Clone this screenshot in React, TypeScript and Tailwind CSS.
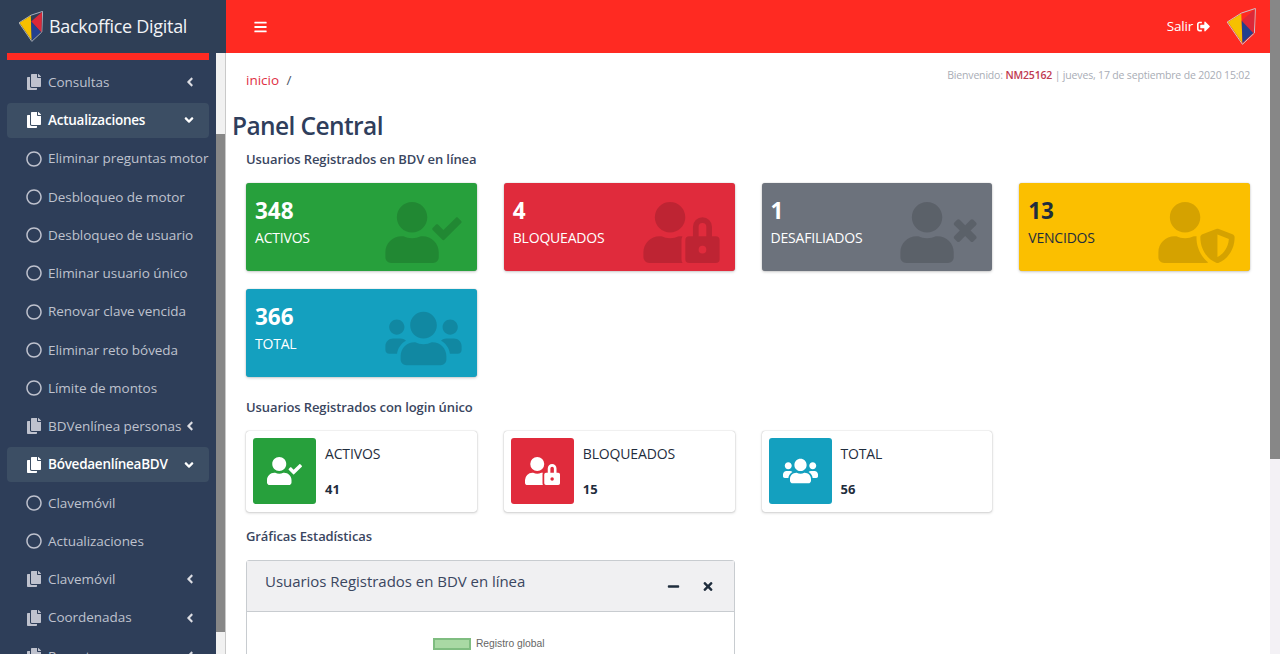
import type { ComponentType } from 'react'
import {
  FaAngleDown,
  FaAngleLeft,
  FaBars,
  FaCopy,
  FaMinus,
  FaRegCircle,
  FaSignOutAlt,
  FaTimes,
  FaUserCheck,
  FaUserLock,
  FaUserShield,
  FaUserTimes,
  FaUsers,
} from 'react-icons/fa'

type MenuItem = { label: string; kind: 'group' | 'open' | 'leaf' }

const MENU: MenuItem[] = [
  { label: 'Consultas', kind: 'group' },
  { label: 'Actualizaciones', kind: 'open' },
  { label: 'Eliminar preguntas motor', kind: 'leaf' },
  { label: 'Desbloqueo de motor', kind: 'leaf' },
  { label: 'Desbloqueo de usuario', kind: 'leaf' },
  { label: 'Eliminar usuario único', kind: 'leaf' },
  { label: 'Renovar clave vencida', kind: 'leaf' },
  { label: 'Eliminar reto bóveda', kind: 'leaf' },
  { label: 'Límite de montos', kind: 'leaf' },
  { label: 'BDVenlínea personas', kind: 'group' },
  { label: 'BóvedaenlíneaBDV', kind: 'open' },
  { label: 'Clavemóvil', kind: 'leaf' },
  { label: 'Actualizaciones', kind: 'leaf' },
  { label: 'Clavemóvil', kind: 'group' },
  { label: 'Coordenadas', kind: 'group' },
  { label: 'Reportes', kind: 'group' },
]

type Stat = {
  value: string
  label: string
  icon: ComponentType<{ className?: string }>
  color: string
  dark?: boolean
}

const STATS: Stat[] = [
  { value: '348', label: 'ACTIVOS', icon: FaUserCheck, color: 'bg-[#27a03c]' },
  { value: '4', label: 'BLOQUEADOS', icon: FaUserLock, color: 'bg-[#e02b3c]' },
  { value: '1', label: 'DESAFILIADOS', icon: FaUserTimes, color: 'bg-[#6c727c]' },
  { value: '13', label: 'VENCIDOS', icon: FaUserShield, color: 'bg-[#fbbf00]', dark: true },
  { value: '366', label: 'TOTAL', icon: FaUsers, color: 'bg-[#14a0bf]' },
]

const LOGIN_STATS: Stat[] = [
  { value: '41', label: 'ACTIVOS', icon: FaUserCheck, color: 'bg-[#27a03c]' },
  { value: '15', label: 'BLOQUEADOS', icon: FaUserLock, color: 'bg-[#e02b3c]' },
  { value: '56', label: 'TOTAL', icon: FaUsers, color: 'bg-[#14a0bf]' },
]

function Logo({ className }: { className?: string }) {
  return (
    <svg viewBox="0 0 24 31" className={className}>
      <polygon points="0,11.8 12,4.2 23.6,0.4 22.8,21 12.8,30.4" fill="none" stroke="#c9ccd6" strokeWidth="0.8" />
      <polygon points="0.6,11.8 11.8,4.8 12.8,29.6" fill="#f6c000" />
      <polygon points="12.2,10.6 23,1 22.4,21.6" fill="#dc2838" />
      <polygon points="12.2,10.6 21.8,21 12.8,29.4" fill="#23408f" />
    </svg>
  )
}

function MenuRow({ item }: { item: MenuItem }) {
  const open = item.kind === 'open'
  const Icon = item.kind === 'leaf' ? FaRegCircle : FaCopy
  return (
    <li
      className={`mx-[7px] mb-[3.25px] flex h-[35px] shrink-0 items-center whitespace-nowrap rounded pl-[19px] text-[13.5px] ${
        open ? 'bg-[#3c4e64] font-semibold tracking-[-0.25px] text-white' : 'tracking-[-0.05px] text-[#bfc2ce]'
      }`}
    >
      <Icon className="mr-[6px] h-[16px] w-[16px] shrink-0" />
      <span className="min-w-0 flex-1">{item.label}</span>
      {item.kind === 'group' && <FaAngleLeft className="mr-[14px] h-[14px] w-[10px] shrink-0 text-[#dcdde3]" />}
      {open && <FaAngleDown className="mr-[14px] h-[14px] w-[12px] shrink-0 text-white" />}
    </li>
  )
}

function Sidebar() {
  return (
    <aside className="flex h-full w-[226px] shrink-0 flex-col">
      <div className="flex h-[53px] shrink-0 items-center bg-[#2f3f56] pl-[19px]">
        <Logo className="mr-[6px] h-[31px] w-[24px]" />
        <span className="text-[18px] tracking-[-0.3px] text-[#f2f3f6]">Backoffice Digital</span>
      </div>
      <div className="flex min-h-0 flex-1">
        <nav className="w-[216px] shrink-0 overflow-hidden bg-[#2e3e59]">
          <div className="mx-[7px] h-[7px] bg-[#ff2a22]" />
          <ul className="flex flex-col pt-[4.5px]">
            {MENU.map((item, i) => (
              <MenuRow key={i} item={item} />
            ))}
          </ul>
        </nav>
        <div className="flex w-[10px] flex-col border-r border-[#c9c9c9] bg-[#f1f1f1]">
          <div className="h-[81px] shrink-0" />
          <div className="h-[498px] shrink-0 bg-[#878787]" />
        </div>
      </div>
    </aside>
  )
}

function StatCard({ stat }: { stat: Stat }) {
  const Icon = stat.icon
  return (
    <div
      className={`relative h-[88px] rounded-[3px] px-[9px] pt-[14px] shadow-[0_0_1px_rgba(0,0,0,.3),0_1px_3px_rgba(0,0,0,.2)] ${stat.color} ${
        stat.dark ? 'text-[#1f2d3d]' : 'text-white'
      }`}
    >
      <p className="text-[22.5px] leading-[28px] font-bold">{stat.value}</p>
      <p className="mt-[2px] text-[14px] leading-[21px] tracking-[-0.2px]">{stat.label}</p>
      <Icon className="absolute top-[19px] right-[15px] h-[61px] w-[77px] text-black/15" />
    </div>
  )
}

function LoginCard({ stat }: { stat: Stat }) {
  const Icon = stat.icon
  return (
    <div className="flex h-[81px] rounded-[3px] bg-white p-[7px] shadow-[0_0_1px_rgba(0,0,0,.35),0_1px_3px_rgba(0,0,0,.18)]">
      <div className={`flex h-[66px] w-[63px] shrink-0 items-center justify-center rounded-[3px] text-white ${stat.color}`}>
        <Icon className="h-[28px] w-[35px]" />
      </div>
      <div className="pt-[5px] pl-[9px] text-[#1f2d3d]">
        <p className="text-[14px] leading-[21px] tracking-[-0.15px]">{stat.label}</p>
        <p className="mt-[15px] text-[13px] leading-[21px] font-bold">{stat.value}</p>
      </div>
    </div>
  )
}

function SectionTitle({ children, className }: { children: string; className?: string }) {
  return <h6 className={`text-[13px] leading-[20px] font-semibold tracking-[-0.1px] text-[#3a4660] ${className ?? ''}`}>{children}</h6>
}

export default function App() {
  return (
    <div
      className="flex h-[654px] w-full overflow-hidden bg-white"
      style={{ fontFamily: '"Open Sans", "Noto Sans", sans-serif' }}
    >
      <Sidebar />

      <div className="flex min-w-0 flex-1 flex-col">
        <header className="flex h-[53px] shrink-0 items-center justify-between bg-[#ff2a22] pr-[13px] pl-[28px] text-white">
          <FaBars className="h-[14px] w-[13px]" />
          <div className="flex items-center">
            <span className="text-[13.5px] tracking-[-0.2px]">Salir</span>
            <FaSignOutAlt className="ml-[3px] h-[13px] w-[15px]" />
            <Logo className="ml-[15px] h-[37px] w-[31px]" />
          </div>
        </header>

        <main className="min-h-0 flex-1 overflow-hidden pr-[20px] pl-[20px]">
          <div className="flex h-[42px] items-start justify-between">
            <p className="pt-[17px] text-[13.5px] leading-[20px] text-[#e0303f]">
              inicio <span className="ml-[4px] text-[#4a5568]">/</span>
            </p>
            <p className="pt-[15px] text-[10.5px] leading-[14px] tracking-[-0.17px] text-[#a9adb6]">
              Bienvenido: <span className="font-semibold text-[#c03a50]">NM25162</span> | jueves, 17 de septiembre de 2020 15:02
            </p>
          </div>

          <h1 className="mt-[13px] -ml-[14px] text-[24.5px] leading-[36px] font-semibold tracking-[-0.6px] text-[#2f3e5c]">
            Panel Central
          </h1>
          <SectionTitle className="mt-[5px]">Usuarios Registrados en BDV en línea</SectionTitle>

          <div className="mt-[14px] grid grid-cols-4 gap-x-[27px] gap-y-[18px]">
            {STATS.map((s) => (
              <StatCard key={s.label} stat={s} />
            ))}
          </div>

          <SectionTitle className="mt-[20px]">Usuarios Registrados con login único</SectionTitle>

          <div className="mt-[14px] grid grid-cols-4 gap-x-[27px]">
            {LOGIN_STATS.map((s) => (
              <LoginCard key={s.label} stat={s} />
            ))}
          </div>

          <SectionTitle className="mt-[14px]">Gráficas Estadísticas</SectionTitle>

          <div className="mt-[14px] grid grid-cols-2 gap-x-[27px]">
            <section className="h-[200px] rounded-t-[3px] border border-[#c8ccd0]">
              <div className="flex h-[51px] items-center justify-between border-b border-[#c8ccd0] bg-[#f0f0f2] pr-[20px] pl-[18px]">
                <h3 className="-mt-[9px] text-[15px] tracking-[-0.03px] text-[#3a4660]">Usuarios Registrados en BDV en línea</h3>
                <div className="flex items-center gap-[22px] text-[#1f2d3d]">
                  <FaMinus className="h-[13px] w-[13px]" />
                  <FaTimes className="h-[13px] w-[12px]" />
                </div>
              </div>
              <div className="flex items-center justify-center pt-[26px] pr-[3px]">
                <span className="h-[12px] w-[38px] border-2 border-[#7fbd80] bg-[#a9d9a4]" />
                <span
                  className="ml-[5px] text-[10.3px] leading-[12px] text-[#666666]"
                  style={{ fontFamily: '"Liberation Sans", sans-serif' }}
                >
                  Registro global
                </span>
              </div>
            </section>
          </div>
        </main>
      </div>

      <div className="h-full w-[10px] shrink-0 bg-[#f3f1f5]">
        <div className="h-[459px] bg-[#878787]" />
      </div>
    </div>
  )
}
